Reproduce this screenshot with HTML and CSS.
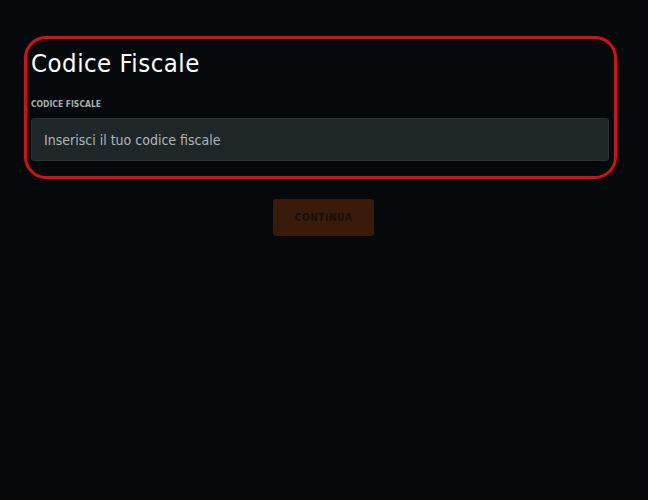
FILE: index.html
```html
<!DOCTYPE html>
<html lang="it">
<head>
<meta charset="utf-8">
<title>Codice Fiscale</title>
<link rel="stylesheet" href="styles.css">
</head>
<body>
<main class="page">
  <section class="card">
    <h1 class="title">Codice Fiscale</h1>
    <label class="label" for="cf">CODICE FISCALE</label>
    <input class="field" id="cf" type="text" placeholder="Inserisci il tuo codice fiscale">
  </section>
  <div class="actions">
    <button class="btn" type="button">CONTINUA</button>
  </div>
</main>
</body>
</html>
```
FILE: styles.css
```css
html, body {
  margin: 0;
  padding: 0;
  background: #05090c;
  height: 100%;
}
body {
  font-family: "DejaVu Sans Condensed", "Liberation Sans", sans-serif;
  color: #f2f2f2;
}
.page {
  padding: 36px 31px 0 24px;
}
.card {
  border: 3px solid #d80f12;
  border-radius: 22px;
  padding: 7px 5px 15px 4px;
  display: flex;
  flex-direction: column;
}
.title {
  margin: 0;
  font-size: 25.5px;
  font-weight: 400;
  line-height: 34px;
  color: #ffffff;
  letter-spacing: 0.5px;
}
.label {
  margin-top: 19px;
  font-size: 8.5px;
  font-weight: 700;
  line-height: 11px;
  color: #a9adaf;
}
.field {
  margin-top: 8px;
  height: 43px;
  box-sizing: border-box;
  background: #1e2628;
  border: 1px solid #2b3335;
  border-radius: 3px;
  padding: 0 12px;
  font-family: inherit;
  font-size: 14px;
  color: #e0e0e0;
  outline: none;
}
.field::placeholder {
  color: #b0b6b9;
}
.actions {
  display: flex;
  justify-content: center;
  margin-top: 20px;
  padding-left: 6px;
}
.btn {
  width: 101px;
  height: 37px;
  background: #3a1b0a;
  border: none;
  border-radius: 3px;
  font-family: inherit;
  font-size: 10px;
  font-weight: 700;
  letter-spacing: 0.6px;
  color: #15100c;
}
```
